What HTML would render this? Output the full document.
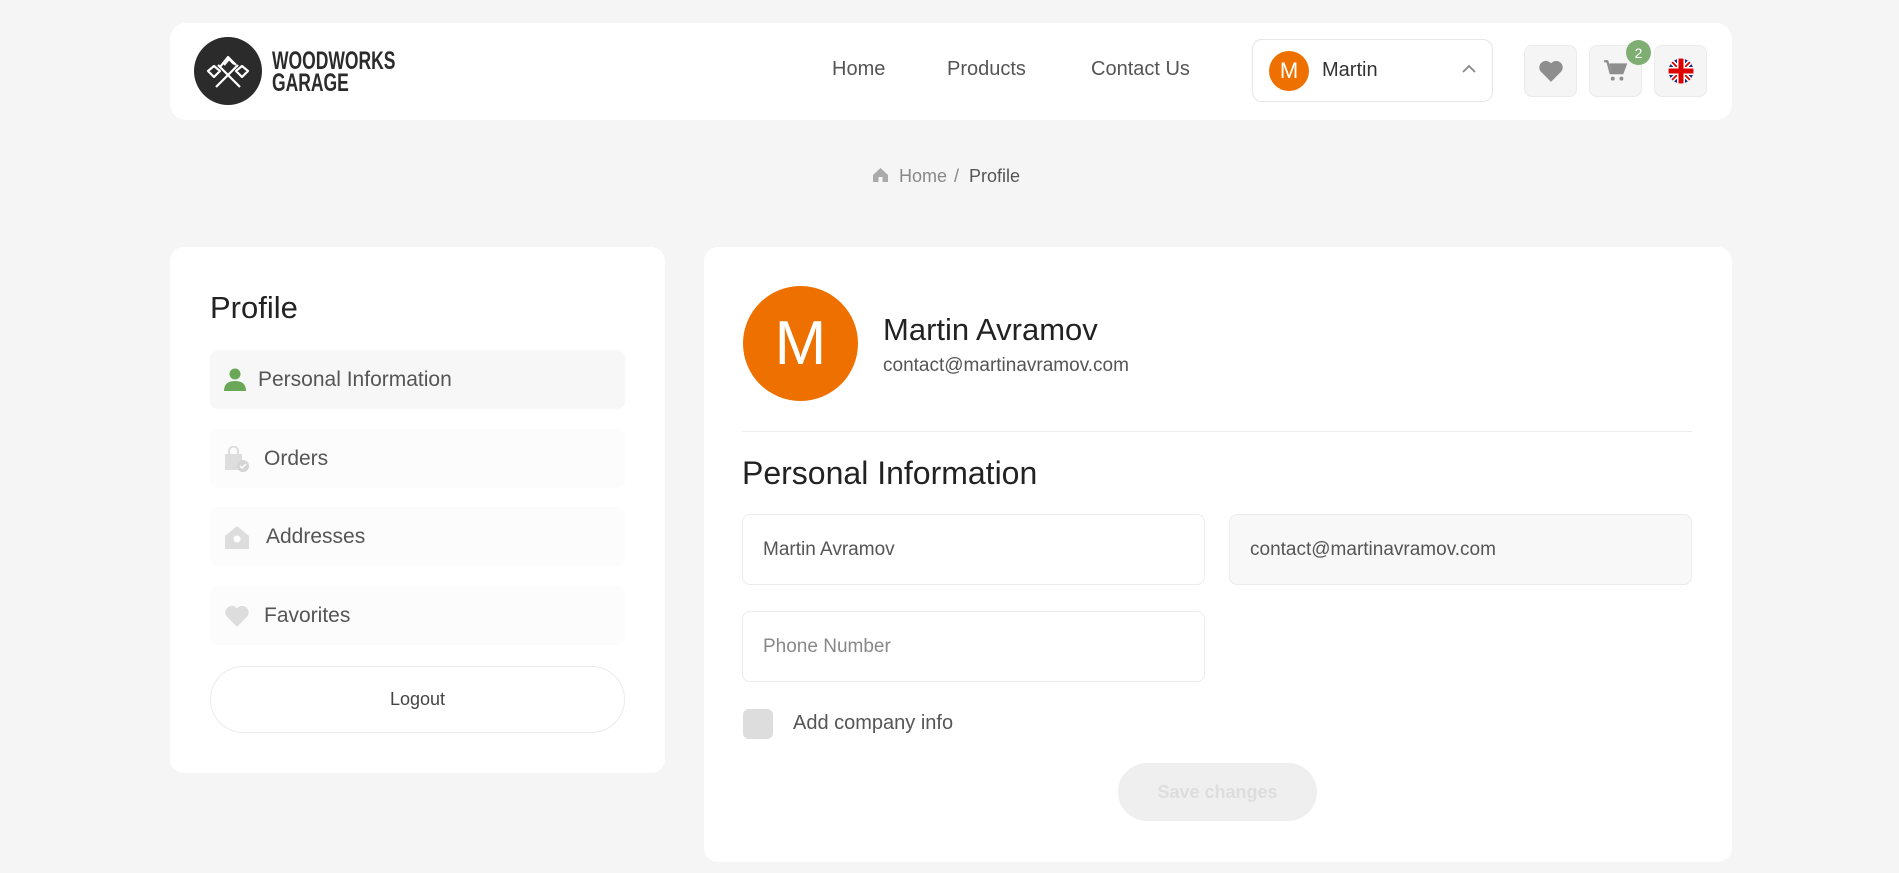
<!DOCTYPE html>
<html><head><meta charset="utf-8">
<style>
*{box-sizing:border-box;margin:0;padding:0}
html,body{width:1899px;height:873px;overflow:hidden;background:#f5f5f5;font-family:"Liberation Sans",sans-serif;color:#222}
.abs{position:absolute}
.card{position:absolute;background:#fff;border-radius:14px}
.nav{position:absolute;top:58px;font-size:20px;color:#555}
.ib{position:absolute;top:45px;width:53px;height:52px;border:1px solid #ebebeb;background:#f5f5f5;border-radius:8px;display:flex;align-items:center;justify-content:center}
.mi{position:absolute;left:210px;width:415px;height:59px;border-radius:8px;background:#fcfcfc;display:flex;align-items:center;font-size:21px;color:#555}
.inp{position:absolute;border:1px solid #ececec;border-radius:8px;height:71px;display:flex;align-items:center;padding-left:20px;font-size:19px;color:#555}
</style></head><body>

<div class="card" style="left:170px;top:23px;width:1562px;height:97px;border-radius:16px"></div>
<svg class="abs" style="left:194px;top:37px" width="68" height="68" viewBox="0 0 68 68">
<circle cx="34" cy="34" r="34" fill="#2b2b2b"/>
<g fill="none" stroke="#fff" stroke-width="2.2" stroke-linejoin="round">
<path d="M22 50 L44 28 M46 50 L24 28"/>
<path d="M14 34 l6-5 6 5-6 6z M42 34 l6-5 6 5-6 6z"/>
<path d="M26 30 l8-10 8 8 M30 28 l5-6 5 5"/>
</g></svg>
<div class="abs" style="left:272px;top:50px;font-weight:bold;font-size:25px;line-height:22px;color:#2b2b2b;transform:scaleX(0.7);transform-origin:left top">WOODWORKS<br>GARAGE</div>

<div class="nav" style="left:832px">Home</div>
<div class="nav" style="left:947px">Products</div>
<div class="nav" style="left:1091px">Contact Us</div>

<div class="abs" style="left:1252px;top:39px;width:241px;height:63px;border:1px solid #e6e6e6;border-radius:10px"></div>
<div class="abs" style="left:1269px;top:51px;width:40px;height:40px;border-radius:50%;background:#ee7100;color:#fff;font-size:22px;display:flex;align-items:center;justify-content:center">M</div>
<div class="abs" style="left:1322px;top:59px;font-size:20px;color:#333">Martin</div>
<svg class="abs" style="left:1461px;top:64px" width="16" height="10" viewBox="0 0 16 10"><path d="M2 8 L8 2 L14 8" fill="none" stroke="#888" stroke-width="1.8"/></svg>

<div class="ib" style="left:1524px"><svg width="26" height="24" viewBox="0 0 24 22"><path d="M12 21 L2.5 11.5 A5.5 5.5 0 0 1 12 4 A5.5 5.5 0 0 1 21.5 11.5 Z" fill="#8e8e8e"/></svg></div>
<div class="ib" style="left:1589px"><svg width="28" height="26" viewBox="0 0 24 24"><path d="M1 3h3l3 11h11l3-8H6" fill="none" stroke="#8e8e8e" stroke-width="2"/><path d="M6 6h15l-3 8H8z" fill="#8e8e8e"/><circle cx="9" cy="19" r="1.8" fill="#8e8e8e"/><circle cx="17" cy="19" r="1.8" fill="#8e8e8e"/></svg></div>
<div class="abs" style="left:1626px;top:40px;width:25px;height:25px;border-radius:50%;background:#7fae72;color:#fff;font-size:14px;display:flex;align-items:center;justify-content:center">2</div>
<div class="ib" style="left:1654px"><svg width="26" height="26" viewBox="0 0 26 26"><defs><clipPath id="c"><circle cx="13" cy="13" r="12.5"/></clipPath></defs><g clip-path="url(#c)"><rect width="26" height="26" fill="#1a2a7a"/><path d="M0 0L26 26M26 0L0 26" stroke="#fff" stroke-width="5"/><path d="M0 0L26 26M26 0L0 26" stroke="#d00" stroke-width="1.8"/><path d="M13 0V26M0 13H26" stroke="#fff" stroke-width="8"/><path d="M13 0V26M0 13H26" stroke="#d00" stroke-width="5"/></g></svg></div>

<svg class="abs" style="left:872px;top:167px" width="17" height="16" viewBox="0 0 17 16"><path d="M8.5 1 L16 8 V15 H1 V8 Z" fill="#aaa"/><rect x="6.5" y="10" width="4" height="5" fill="#f5f5f5"/></svg>
<div class="abs" style="left:899px;top:166px;font-size:18px;color:#888">Home</div>
<div class="abs" style="left:954px;top:166px;font-size:18px;color:#888">/</div>
<div class="abs" style="left:969px;top:166px;font-size:18px;color:#555">Profile</div>

<div class="card" style="left:170px;top:247px;width:495px;height:526px"></div>
<div class="abs" style="left:210px;top:290px;font-size:31px;color:#222">Profile</div>
<div class="mi" style="top:350px;background:#f7f7f7"><svg style="margin:0 12px 0 14px" width="22" height="24" viewBox="0 0 22 24"><circle cx="11" cy="6" r="5.5" fill="#6aa757"/><path d="M0 23 Q0 13 11 13 Q22 13 22 23Z" fill="#6aa757"/></svg>Personal Information</div>
<div class="mi" style="top:429px"><svg style="margin:0 14px 0 14px" width="26" height="26" viewBox="0 0 26 26"><path d="M1 8h17v16H1z" fill="#ddd"/><path d="M5 8V5a4.5 4.5 0 0 1 9 0v3" fill="none" stroke="#ddd" stroke-width="2"/><circle cx="19" cy="20" r="6" fill="#d4d4d4"/><path d="M16 20l2 2 4-4" stroke="#fff" stroke-width="1.5" fill="none"/></svg>Orders</div>
<div class="mi" style="top:507px"><svg style="margin:0 16px 0 14px" width="26" height="26" viewBox="0 0 26 26"><path d="M13 2 L25 12 V25 H1 V12 Z" fill="#ddd"/><circle cx="13" cy="15" r="3.5" fill="#fff"/></svg>Addresses</div>
<div class="mi" style="top:586px"><svg style="margin:0 14px 0 14px" width="26" height="24" viewBox="0 0 24 22"><path d="M12 21 L2.5 11.5 A5.5 5.5 0 0 1 12 4 A5.5 5.5 0 0 1 21.5 11.5 Z" fill="#ddd"/></svg>Favorites</div>
<div class="abs" style="left:210px;top:666px;width:415px;height:67px;border:1.5px solid #ebebeb;border-radius:34px;display:flex;align-items:center;justify-content:center;font-size:18px;color:#444">Logout</div>

<div class="card" style="left:704px;top:247px;width:1028px;height:615px"></div>
<div class="abs" style="left:743px;top:286px;width:115px;height:115px;border-radius:50%;background:#ee7100;color:#fff;font-size:62px;display:flex;align-items:center;justify-content:center">M</div>
<div class="abs" style="left:883px;top:312px;font-size:31px;color:#222">Martin Avramov</div>
<div class="abs" style="left:883px;top:355px;font-size:19px;color:#555">contact@martinavramov.com</div>
<div class="abs" style="left:742px;top:431px;width:950px;height:1px;background:#eee"></div>
<div class="abs" style="left:742px;top:455px;font-size:32px;color:#222">Personal Information</div>
<div class="inp" style="left:742px;top:514px;width:463px">Martin Avramov</div>
<div class="inp" style="left:1229px;top:514px;width:463px;background:#f8f8f8">contact@martinavramov.com</div>
<div class="inp" style="left:742px;top:611px;width:463px;color:#888">Phone Number</div>
<div class="abs" style="left:743px;top:709px;width:30px;height:30px;border-radius:6px;background:#ddd"></div>
<div class="abs" style="left:793px;top:712px;font-size:20px;color:#555">Add company info</div>
<div class="abs" style="left:1118px;top:763px;width:199px;height:58px;border-radius:29px;background:#efefef;display:flex;align-items:center;justify-content:center;font-size:18px;font-weight:bold;color:#ddd">Save changes</div>
</body></html>
